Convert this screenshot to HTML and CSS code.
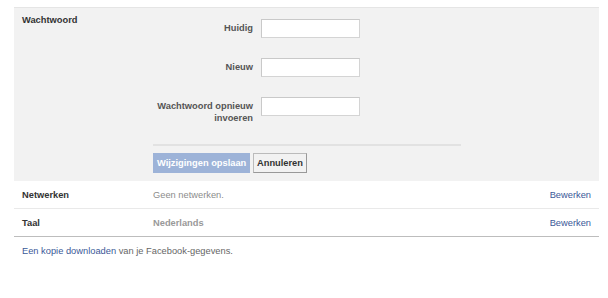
FILE: index.html
```html
<!DOCTYPE html>
<html lang="nl">
<head>
  <meta charset="UTF-8" />
  <title>Instellingen</title>
  <link rel="stylesheet" href="styles.css">
</head>
<body>

<div class="settings">
  <div class="setting editing">
    <div class="setting-label">Wachtwoord</div>
    <div class="setting-body">
      <div class="field">
        <label>Huidig</label>
        <input type="password" />
      </div>
      <div class="field">
        <label>Nieuw</label>
        <input type="password" />
      </div>
      <div class="field">
        <label>Wachtwoord opnieuw invoeren</label>
        <input type="password" />
      </div>
      <div class="divider"></div>
      <div class="actions">
        <button class="btn btn-primary" disabled>Wijzigingen opslaan</button>
        <button class="btn">Annuleren</button>
      </div>
    </div>
  </div>

  <div class="setting">
    <div class="setting-label">Netwerken</div>
    <div class="setting-value">Geen netwerken.</div>
    <a class="edit-link" href="#">Bewerken</a>
  </div>

  <div class="setting last">
    <div class="setting-label">Taal</div>
    <div class="setting-value strong">Nederlands</div>
    <a class="edit-link" href="#">Bewerken</a>
  </div>
</div>

<div class="footer">
  <a href="#">Een kopie downloaden</a> van je Facebook-gegevens.
</div>

</body>
</html>
```

FILE: styles.css
```css
* {
  margin: 0;
  padding: 0;
  box-sizing: border-box;
}

body {
  background: #fff;
  font-family: 'Liberation Sans', Arial, sans-serif;
  font-size: 9.3px;
  color: #333;
}

a {
  color: #3b5998;
  text-decoration: none;
}

.settings {
  margin: 7px 9px 0 14px;
  border-top: 1px solid #e5e5e5;
}

.setting {
  display: flex;
  align-items: center;
  height: 28px;
  padding: 0 8px;
  border-bottom: 1px solid #e9e9e9;
}

.setting.last {
  border-bottom-color: #bdbdbd;
}

.setting.editing {
  height: auto;
  align-items: flex-start;
  background: #f2f2f2;
  border-bottom: none;
  padding: 5px 8px 8px;
}

.setting-label {
  width: 131px;
  flex-shrink: 0;
  font-weight: bold;
  color: #333;
  line-height: 14px;
}

.setting-value {
  flex: 1;
  color: #8c8c8c;
}

.setting-value.strong {
  font-weight: bold;
  color: #999;
}

.edit-link {
  margin-left: auto;
}

.setting-body {
  padding-top: 6px;
}

.field {
  display: grid;
  grid-template-columns: 100px 99px;
  column-gap: 8px;
  align-items: start;
  margin-bottom: 20px;
}

.field label {
  text-align: right;
  font-weight: bold;
  color: #555;
  line-height: 12px;
  padding-top: 3px;
}

.field input {
  height: 19px;
  border: 1px solid #c9c9c9;
  border-color: #c9c9c9 #d4d4d4 #d4d4d4 #c9c9c9;
  background: #fff;
  outline: none;
}

.divider {
  width: 308px;
  height: 2px;
  background: #e2e2e2;
  margin-top: 5px;
  margin-bottom: 7px;
}

.actions {
  display: flex;
  gap: 3px;
}

.btn {
  height: 20px;
  padding: 0 3px;
  white-space: nowrap;
  font-family: inherit;
  font-size: 9.3px;
  font-weight: bold;
  color: #333;
  background: #f2f2f2;
  border: 1px solid #999;
  border-color: #bbb #999 #999 #bbb;
}

.btn-primary {
  width: 97px;
  color: #fff;
  background: #9db3d8;
  border-color: #9db3d8;
}

.footer {
  padding: 8px 22px;
  color: #666;
  line-height: 12px;
}
```
